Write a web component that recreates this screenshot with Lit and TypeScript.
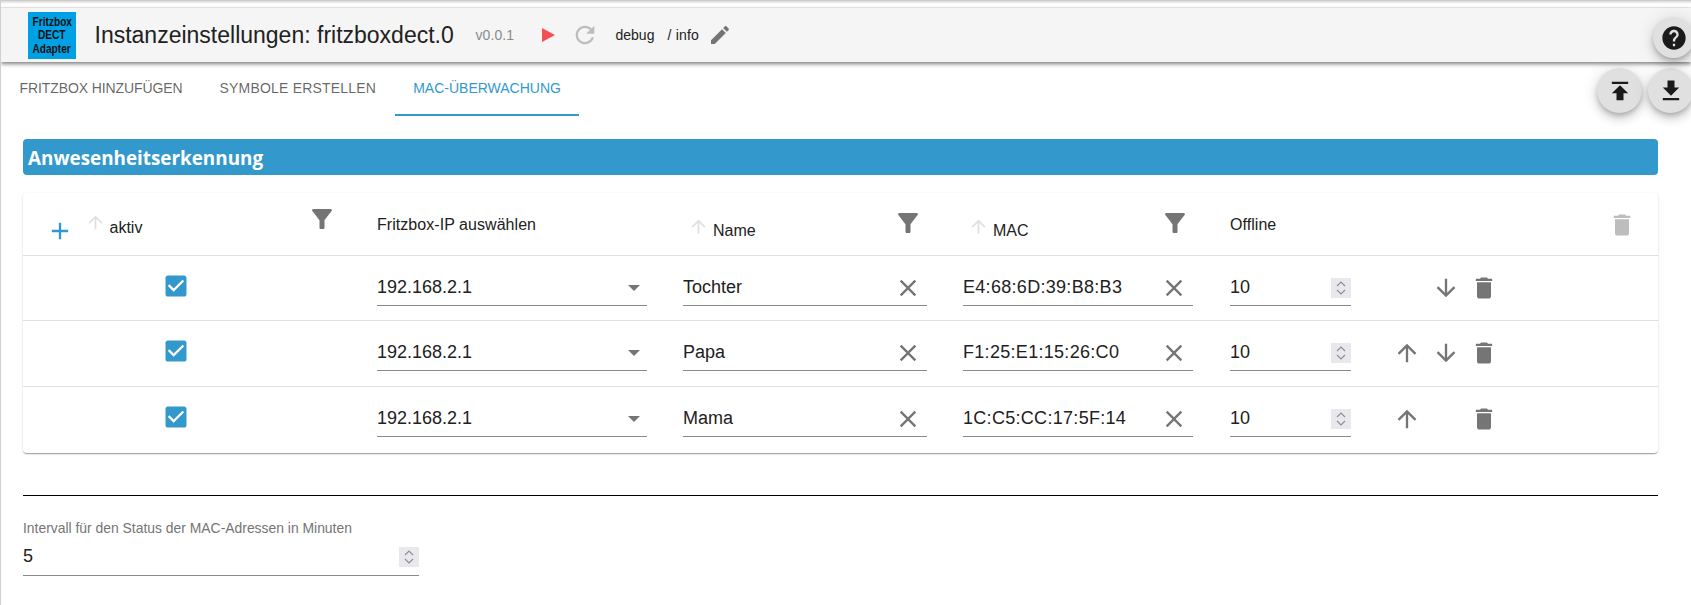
import { LitElement, css, html, nothing, svg } from 'lit';
import { customElement } from 'lit/decorators.js';

const ICON = {
  help: 'M12 2C6.48 2 2 6.48 2 12s4.48 10 10 10 10-4.48 10-10S17.52 2 12 2zm1 17h-2v-2h2v2zm2.07-7.75l-.9.92C13.45 12.9 13 13.5 13 15h-2v-.5c0-1.1.45-2.1 1.17-2.83l1.24-1.26c.37-.36.59-.86.59-1.41 0-1.1-.9-2-2-2s-2 .9-2 2H8c0-2.21 1.79-4 4-4s4 1.79 4 4c0 .88-.36 1.68-.93 2.25z',
  publish: 'M5 4v2h14V4H5zm0 10h4v6h6v-6h4l-7-7-7 7z',
  download: 'M19 9h-4V3H9v6H5l7 7 7-7zM5 18v2h14v-2H5z',
  up: 'M4 12l1.41 1.41L11 7.83V20h2V7.83l5.58 5.59L20 12l-8-8-8 8z',
  down: 'M20 12l-1.41-1.41L13 16.17V4h-2v12.17l-5.58-5.59L4 12l8 8 8-8z',
  trash: 'M6 19c0 1.1.9 2 2 2h8c1.1 0 2-.9 2-2V7H6v12zM19 4h-3.5l-1-1h-5l-1 1H5v2h14V4z',
  clear: 'M19 6.41L17.59 5 12 10.59 6.41 5 5 6.41 10.59 12 5 17.59 6.41 19 12 13.41 17.59 19 19 17.59 13.41 12z',
  plus: 'M19 13h-6v6h-2v-6H5v-2h6V5h2v6h6v2z',
  filter: 'M4.25 5.61C6.27 8.2 10 13 10 13v6c0 .55.45 1 1 1h2c.55 0 1-.45 1-1v-6s3.72-4.8 5.74-7.39c.51-.66.04-1.61-.79-1.61H5.04c-.83 0-1.3.95-.79 1.61z',
  pencil: 'M3 17.25V21h3.75L17.81 9.94l-3.75-3.75L3 17.25zM20.71 7.04c.39-.39.39-1.02 0-1.41l-2.34-2.34c-.39-.39-1.02-.39-1.41 0l-1.83 1.83 3.75 3.75 1.83-1.83z',
  reload: 'M17.65 6.35C16.2 4.9 14.21 4 12 4c-4.42 0-7.99 3.58-7.99 8s3.57 8 7.99 8c3.73 0 6.84-2.55 7.73-6h-2.08c-.82 2.33-3.04 4-5.65 4-3.31 0-6-2.69-6-6s2.69-6 6-6c1.66 0 3.14.69 4.22 1.78L13 11h7V4l-2.35 2.35z',
  check: 'M19 3H5c-1.11 0-2 .9-2 2v14c0 1.1.89 2 2 2h14c1.11 0 2-.9 2-2V5c0-1.1-.89-2-2-2zm-9 14l-5-5 1.41-1.41L10 14.17l7.59-7.59L19 8l-9 9z',
};

const icon = (d: string, cls = '') =>
  html`<svg class="icon ${cls}" viewBox="0 0 24 24">${svg`<path d=${d}></path>`}</svg>`;

const ROWS = [
  { ip: '192.168.2.1', name: 'Tochter', mac: 'E4:68:6D:39:B8:B3', offline: '10', up: false, down: true },
  { ip: '192.168.2.1', name: 'Papa', mac: 'F1:25:E1:15:26:C0', offline: '10', up: true, down: true },
  { ip: '192.168.2.1', name: 'Mama', mac: '1C:C5:CC:17:5F:14', offline: '10', up: true, down: false },
];

@customElement('app-root')
export class AppRoot extends LitElement {
  static styles = css`
    :host {
      display: block;
      height: 605px;
      overflow: hidden;
      background: #fff;
      border-left: 1px solid #d0d0d0;
      font-family: 'Liberation Sans', Arial, sans-serif;
      color: #212121;
      box-sizing: border-box;
    }

    .icon {
      display: block;
      flex-shrink: 0;
      fill: currentColor;
    }

    .top-strip {
      height: 8px;
      background: linear-gradient(#c4c4c4 0, #e6e6e6 2px, #fff 4px, #fff 7px, #eee 7px);
      margin-left: -1px;
    }

    .header {
      display: flex;
      align-items: center;
      height: 54px;
      background: #f5f5f5;
      box-shadow: 0 2px 4px rgba(0, 0, 0, 0.5);
      padding-left: 27px;
      position: relative;
    }

    .logo {
      width: 48px;
      height: 47px;
      background: #00a0e4;
      color: #111;
      font-size: 13px;
      font-weight: 700;
      line-height: 13.3px;
      white-space: nowrap;
      display: flex;
      flex-direction: column;
      align-items: center;
      justify-content: center;
      flex-shrink: 0;
    }

    .logo span {
      transform: scaleX(0.78);
    }

    .title {
      margin: 0 0 0 18.5px;
      font-size: 23px;
      font-weight: 400;
      width: 381px;
      white-space: nowrap;
    }

    .version {
      width: 66px;
      font-size: 14px;
      letter-spacing: 0.1px;
      color: #8a8a8a;
    }

    .play {
      width: 0;
      height: 0;
      border-left: 13px solid #f44f55;
      border-top: 7.5px solid transparent;
      border-bottom: 7.5px solid transparent;
      margin-right: 18px;
    }

    .reload {
      width: 28px;
      height: 28px;
      color: #bdbdbd;
      margin: 0 17px 0 -2px;
    }

    .debug {
      font-size: 14px;
      width: 52px;
    }

    .info {
      font-size: 14px;
      width: 40px;
      letter-spacing: 0.2px;
    }

    .pencil {
      width: 24px;
      height: 24px;
      color: #757575;
    }

    .fab {
      display: flex;
      align-items: center;
      justify-content: center;
      border-radius: 50%;
      background: #e0e0e0;
      color: #1a1a1a;
      box-shadow: 0 3px 5px -1px rgba(0, 0, 0, 0.2), 0 6px 10px 0 rgba(0, 0, 0, 0.14), 0 1px 18px 0 rgba(0, 0, 0, 0.12);
      flex-shrink: 0;
    }

    .fab .icon {
      width: 28px;
      height: 28px;
    }

    .help {
      width: 41px;
      height: 41px;
      margin-left: auto;
      margin-right: -3px;
      margin-top: 5px;
    }

    .tab-bar {
      display: flex;
      height: 54px;
      align-items: flex-start;
    }

    .tab {
      height: 54px;
      box-sizing: border-box;
      padding: 0 18.5px;
      display: flex;
      align-items: center;
      font-size: 14px;
      letter-spacing: -0.1px;
      color: rgba(0, 0, 0, 0.62);
      border-bottom: 2px solid transparent;
      white-space: nowrap;
    }

    .tab:nth-child(2) {
      letter-spacing: 0.2px;
    }

    .tab.active {
      letter-spacing: 0;
      color: #3399cc;
      border-bottom-color: #3399cc;
    }

    .tab-actions {
      margin-left: auto;
      margin-right: -2px;
      margin-top: 6px;
      display: flex;
      gap: 6px;
    }

    .tab-actions .fab {
      width: 45px;
      height: 45px;
    }

    .content {
      padding: 23px 33px 0 22px;
    }

    .section-title {
      height: 36px;
      background: #3399cc;
      color: #fff;
      border-radius: 4px;
      font-family: 'Open Sans', sans-serif;
      font-size: 18.85px;
      font-weight: 700;
      line-height: 38px;
      padding-left: 5px;
    }

    .card {
      margin-top: 18px;
      border-radius: 4px;
      background: #fff;
      box-shadow: 0 2px 1px -1px rgba(0, 0, 0, 0.2), 0 1px 1px 0 rgba(0, 0, 0, 0.14), 0 1px 3px 0 rgba(0, 0, 0, 0.12);
    }

    .row {
      display: grid;
      grid-template-columns: 354px 306px 280px 267px 167px 1fr;
      box-sizing: border-box;
      height: 66px;
      border-bottom: 1px solid #e0e0e0;
      padding-bottom: 15px;
      align-items: end;
    }

    .row.head + .row {
      height: 65px;
      padding-bottom: 14px;
    }

    .row:last-child {
      height: 65.5px;
      border-bottom: 0;
      padding-bottom: 15.5px;
    }

    .row.head {
      height: 63px;
      padding: 0;
      font-size: 16px;
      align-items: start;
    }

    .head-cell {
      display: flex;
      align-items: flex-start;
      height: 100%;
      position: relative;
    }

    .plain-head {
      letter-spacing: 0.05px;
    }

    .sort {
      width: 21px;
      height: 21px;
      color: #e0e0e0;
    }

    .plus {
      width: 28px;
      height: 28px;
      color: #3399cc;
      margin: 24px 0 0 23px;
    }

    .active-head .sort {
      margin: 19px 0 0 10.5px;
    }

    .active-head span {
      margin: 26px 0 0 4px;
    }

    .name-head {
      padding-left: 5px;
    }

    .name-head .sort {
      margin-top: 22.5px;
    }

    .name-head span {
      margin: 29px 0 0 4px;
    }

    .plain-head span {
      margin-top: 23px;
    }

    .filter {
      position: absolute;
      top: 14.5px;
      width: 30px;
      height: 30px;
      color: #757575;
    }

    .active-head .filter {
      top: 10.5px;
    }

    .head-trash {
      width: 28px;
      height: 28px;
      margin: 17.5px 0 0 210.5px;
      color: #bdbdbd;
    }

    .check-cell {
      display: flex;
      padding: 16px 0 0 138.5px;
      height: 100%;
      align-items: flex-start;
      box-sizing: border-box;
    }

    .check {
      width: 28px;
      height: 28px;
      color: #3399cc;
    }

    .control {
      display: flex;
      align-items: center;
      justify-content: space-between;
      box-sizing: border-box;
      height: 34px;
      border-bottom: 1px solid #8a8a8a;
      font-size: 18px;
      color: #212121;
      padding-bottom: 2px;
    }

    .control .x {
      width: 28px;
      height: 28px;
      color: #757575;
      margin-right: 5px;
    }

    .mac {
      letter-spacing: 0.3px;
    }

    .caret {
      width: 0;
      height: 0;
      border-left: 6px solid transparent;
      border-right: 6px solid transparent;
      border-top: 6px solid #757575;
      margin-right: 7px;
    }

    .spin {
      width: 20px;
      height: 20px;
      background: #e9e9ed;
      color: #8d8d99;
      display: block;
      flex-shrink: 0;
      fill: none;
      stroke: currentColor;
      stroke-width: 1.2;
    }

    .actions {
      display: flex;
      align-items: center;
      height: 34px;
      padding-bottom: 2px;
      box-sizing: border-box;
    }

    .actions .slot {
      width: 39px;
      color: #757575;
    }

    .actions .slot .icon {
      width: 28px;
      height: 28px;
      margin-left: -4.5px;
    }

    .actions .trash {
      width: 28px;
      height: 28px;
      color: #757575;
      margin-left: -5px;
    }

    .divider {
      height: 1px;
      background: #000;
      margin-top: 42.5px;
    }

    .interval {
      width: 396px;
      margin-top: 23px;
    }

    .interval label {
      display: block;
      font-size: 13.9px;
      line-height: 18px;
      color: #757575;
    }

    .interval .control {
      margin-top: 5px;
      padding-bottom: 4px;
    }
  `;

  private spinner() {
    return html`<svg class="spin" viewBox="0 0 20 20">
      <path d="M6 8l4-4 4 4M6 12l4 4 4-4"></path>
    </svg>`;
  }

  private filter(left: number) {
    return html`<svg class="icon filter" style="left:${left}px" viewBox="0 0 24 24"><path d=${ICON.filter}></path></svg>`;
  }

  private renderRow(row: (typeof ROWS)[number]) {
    return html`
      <div class="row">
        <div class="check-cell">${icon(ICON.check, 'check')}</div>
        <div class="control" style="width:270px">${row.ip}<span class="caret"></span></div>
        <div class="control" style="width:244px"><span>${row.name}</span>${icon(ICON.clear, 'x')}</div>
        <div class="control" style="width:230px"><span class="mac">${row.mac}</span>${icon(ICON.clear, 'x')}</div>
        <div class="control" style="width:121px"><span>${row.offline}</span>${this.spinner()}</div>
        <div class="actions">
          <span class="slot">${row.up ? icon(ICON.up) : nothing}</span>
          <span class="slot">${row.down ? icon(ICON.down) : nothing}</span>
          ${icon(ICON.trash, 'trash')}
        </div>
      </div>
    `;
  }

  render() {
    return html`
      <div class="top-strip"></div>
      <header class="header">
        <div class="logo"><span>Fritzbox</span><span>DECT</span><span>Adapter</span></div>
        <h1 class="title">Instanzeinstellungen: fritzboxdect.0</h1>
        <span class="version">v0.0.1</span>
        <span class="play"></span>
        ${icon(ICON.reload, 'reload')}
        <span class="debug">debug</span>
        <span class="info">/ info</span>
        ${icon(ICON.pencil, 'pencil')}
        <div class="fab help">${icon(ICON.help)}</div>
      </header>
      <nav class="tab-bar">
        <div class="tab">FRITZBOX HINZUFÜGEN</div>
        <div class="tab">SYMBOLE ERSTELLEN</div>
        <div class="tab active">MAC-ÜBERWACHUNG</div>
        <div class="tab-actions">
          <div class="fab">${icon(ICON.publish)}</div>
          <div class="fab">${icon(ICON.download)}</div>
        </div>
      </nav>
      <main class="content">
        <div class="section-title">Anwesenheitserkennung</div>
        <div class="card">
          <div class="row head">
            <div class="head-cell active-head">
              ${icon(ICON.plus, 'plus')}${icon(ICON.up, 'sort')}<span>aktiv</span>${this.filter(284)}
            </div>
            <div class="head-cell plain-head"><span>Fritzbox-IP auswählen</span></div>
            <div class="head-cell name-head">
              ${icon(ICON.up, 'sort')}<span>Name</span>${this.filter(209.5)}
            </div>
            <div class="head-cell name-head">
              ${icon(ICON.up, 'sort')}<span>MAC</span>${this.filter(197)}
            </div>
            <div class="head-cell plain-head"><span>Offline</span></div>
            <div class="head-cell">${icon(ICON.trash, 'head-trash')}</div>
          </div>
          ${ROWS.map((row) => this.renderRow(row))}
        </div>
        <div class="divider"></div>
        <div class="interval">
          <label>Intervall für den Status der MAC-Adressen in Minuten</label>
          <div class="control"><span>5</span>${this.spinner()}</div>
        </div>
      </main>
    `;
  }
}

declare global {
  interface HTMLElementTagNameMap {
    'app-root': AppRoot;
  }
}
